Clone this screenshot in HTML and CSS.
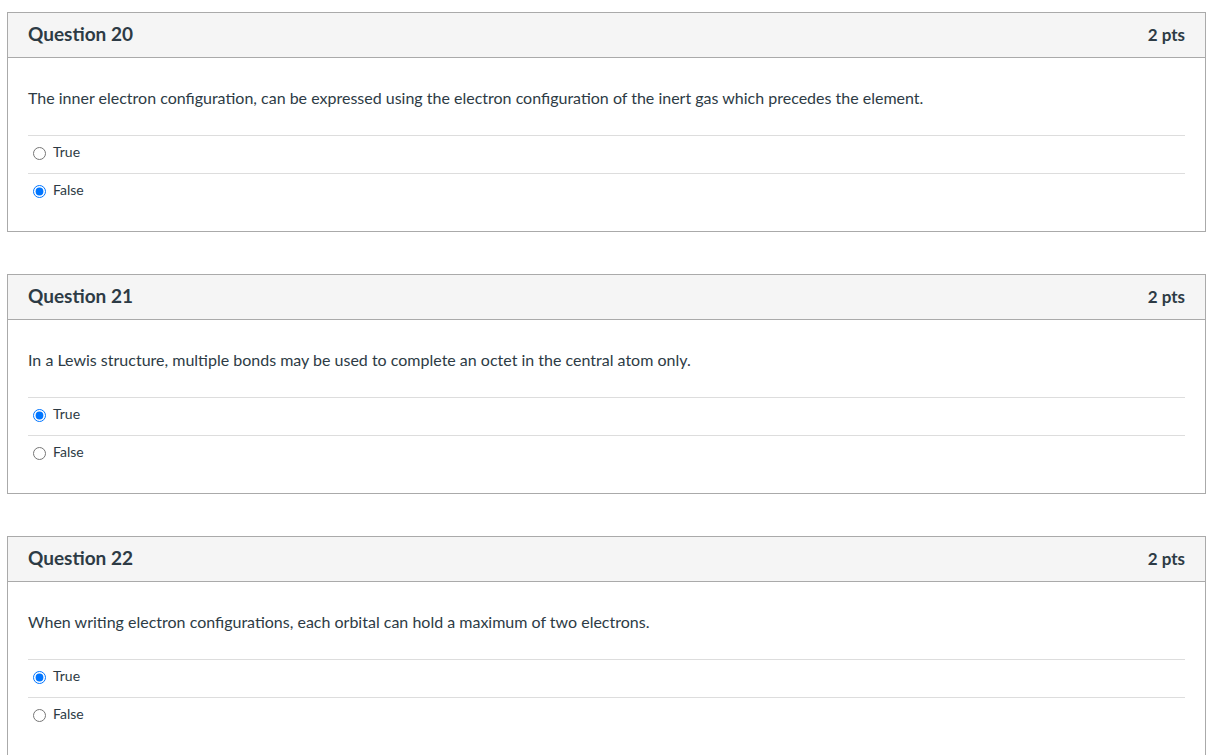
FILE: index.html
```html
<!DOCTYPE html>
<html>
<head>
<meta charset="utf-8">
<link rel="stylesheet" href="styles.css">
</head>
<body>
<div class="card">
  <div class="head"><span class="title">Question 20</span><span class="pts">2 pts</span></div>
  <div class="body">
    <div class="qtext">The inner electron configuration, can be expressed using the electron configuration of the inert gas which precedes the element.</div>
    <div class="answers">
      <label class="ans"><input type="radio" name="q20"><span>True</span></label>
      <label class="ans"><input type="radio" name="q20" checked><span>False</span></label>
    </div>
  </div>
</div>
<div class="card">
  <div class="head"><span class="title">Question 21</span><span class="pts">2 pts</span></div>
  <div class="body">
    <div class="qtext">In a Lewis structure, multiple bonds may be used to complete an octet in the central atom only.</div>
    <div class="answers">
      <label class="ans"><input type="radio" name="q21" checked><span>True</span></label>
      <label class="ans"><input type="radio" name="q21"><span>False</span></label>
    </div>
  </div>
</div>
<div class="card">
  <div class="head"><span class="title">Question 22</span><span class="pts">2 pts</span></div>
  <div class="body">
    <div class="qtext">When writing electron configurations, each orbital can hold a maximum of two electrons.</div>
    <div class="answers">
      <label class="ans"><input type="radio" name="q22" checked><span>True</span></label>
      <label class="ans"><input type="radio" name="q22"><span>False</span></label>
    </div>
  </div>
</div>
</body>
</html>
```
FILE: styles.css
```css
html, body { background: #fff; }
body {
  margin: 12px 5px 0 7px;
  font-family: Lato, "Open Sans", sans-serif;
  color: #2d3b45;
}
.card {
  border: 1px solid #aaaaaa;
  height: 218px;
  margin-bottom: 42px;
  box-sizing: content-box;
}
.head {
  height: 44px;
  background: #f5f5f5;
  border-bottom: 1px solid #aaaaaa;
  display: flex;
  align-items: center;
  justify-content: space-between;
  padding: 0 20px;
}
.title {
  font-size: 19px;
  font-weight: bold;
  position: relative;
  top: -2px;
}
.pts {
  font-size: 17px;
  font-weight: bold;
  position: relative;
  top: -1px;
}
.body {
  padding: 0 20px;
}
.qtext {
  font-size: 16px;
  line-height: 20px;
  padding-top: 30px;
  padding-bottom: 27px;
}
.ans {
  display: flex;
  align-items: center;
  border-top: 1px solid #dddddd;
  height: 37px;
  box-sizing: content-box;
  font-size: 14px;
}
.ans input {
  margin: 0 7px 0 5px;
  width: 13px;
  height: 13px;
  position: relative;
  top: -1px;
}
.ans span { position: relative; top: -3px; }
```
